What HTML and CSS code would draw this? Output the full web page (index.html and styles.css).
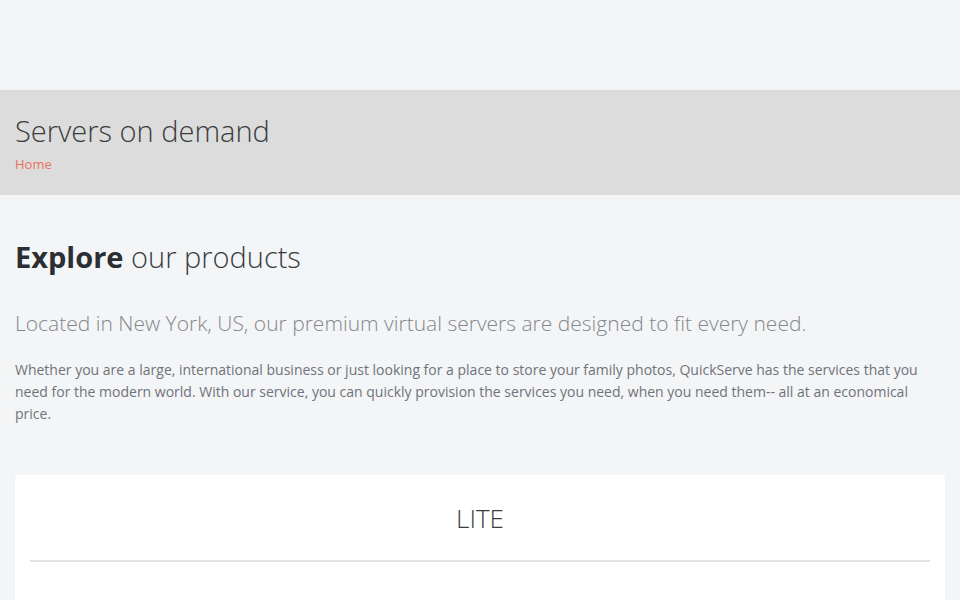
FILE: index.html
```html
<!DOCTYPE html>
<html>
<head>
<meta charset="utf-8">
<link rel="stylesheet" href="styles.css">
</head>
<body>
<div class="topbar"></div>
<section class="banner">
  <h1 class="banner-title">Servers on demand</h1>
  <a class="crumb" href="#">Home</a>
</section>
<main class="content">
  <h2 class="headline"><strong>Explore</strong> our products</h2>
  <p class="lead">Located in New York, US, our premium virtual servers are designed to fit every need.</p>
  <p class="body-text">Whether you are a large, international business or just looking for a place to store your family photos, QuickServe has the services that you need for the modern world. With our service, you can quickly provision the services you need, when you need them-- all at an economical price.</p>
  <div class="card">
    <h3 class="card-title">LITE</h3>
    <hr class="card-rule">
  </div>
</main>
</body>
</html>
```
FILE: styles.css
```css
html, body {
  margin: 0;
  padding: 0;
}
body {
  background: #f4f5f7;
  font-family: "Open Sans", "Liberation Sans", sans-serif;
  color: #333;
  overflow: hidden;
}
.topbar {
  height: 90px;
}
.banner {
  background: #dcdcdc;
  height: 105px;
  box-sizing: border-box;
  padding: 19px 15px 0;
}
.banner-title {
  margin: 0;
  font-size: 29px;
  font-weight: 300;
  line-height: 44px;
  color: #3a3d40;
}
.crumb {
  display: block;
  margin-top: 1px;
  font-size: 13px;
  line-height: 20px;
  color: #e8735c;
  text-decoration: none;
}
.content {
  padding: 0 15px;
}
.headline {
  margin: 40px 0 0;
  font-size: 29px;
  font-weight: 300;
  line-height: 44px;
  color: #3a3d40;
}
.headline strong {
  font-weight: 700;
  color: #2b2f33;
}
.lead {
  margin: 29px 0 0;
  font-size: 21px;
  font-weight: 300;
  line-height: 30px;
  color: #84878b;
}
.body-text {
  margin: 21px 0 0;
  font-size: 14px;
  line-height: 22px;
  color: #6f737a;
}
.card {
  margin-top: 50px;
  background: #fff;
  border-radius: 4px;
  box-shadow: 0 1px 2px rgba(0,0,0,0.04);
  padding: 0 15px;
  height: 200px;
}
.card-title {
  margin: 0;
  padding-top: 25px;
  text-align: center;
  font-size: 26px;
  font-weight: 300;
  line-height: 36px;
  color: #3a3d40;
}
.card-rule {
  margin: 24px 0 0;
  border: 0;
  border-top: 2px solid #e3e3e3;
}
```
